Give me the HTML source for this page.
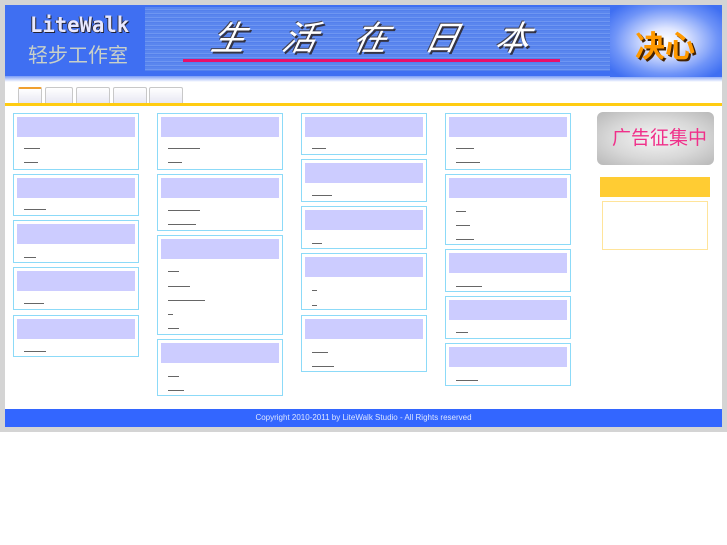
<!DOCTYPE html>
<html><head><meta charset="utf-8"><style>
*{margin:0;padding:0;box-sizing:border-box}
body{width:727px;height:545px;background:#fff;position:relative;overflow:hidden;font-family:"Liberation Sans","Noto Sans CJK SC",sans-serif}
.abs{position:absolute}
.box{position:absolute;border:1px solid #8cdaf8;background:#fff;width:126px}
.box .h{position:absolute;left:3px;top:3px;right:3px;height:20px;background:#ccccff}
.box i{position:absolute;left:10px;height:1px;background:#666}
.tab{position:absolute;top:87px;height:17px;border:1px solid #c8c8c8;border-bottom:none;background:linear-gradient(#fff,#e6e6f2);border-radius:2px 2px 0 0}
</style></head><body>
<div class="abs" style="left:0;top:0;width:727px;height:432px;background:#d4d4d4"></div>
<div class="abs" style="left:5px;top:5px;width:717px;height:422px;background:#fff"></div>
<!-- header -->
<div class="abs" style="left:5px;top:5px;width:717px;height:72px;background:#3f6ff2"></div>
<div class="abs" style="left:5px;top:76px;width:717px;height:6px;background:linear-gradient(#7a9cf6,#fff)"></div>
<div class="abs" style="left:30px;top:13px;font-family:'DejaVu Sans Mono',monospace;font-weight:bold;font-size:21px;color:#e8e8ff;transform:scaleX(0.98);transform-origin:left;text-shadow:1px 1px 0 #223,-1px 0 0 #334">LiteWalk</div>
<div class="abs" style="left:28px;top:39px;font-size:20px;color:#c8d0c8">轻步工作室</div>
<div class="abs" style="left:145px;top:7px;width:465px;height:64px;background:repeating-linear-gradient(#5a86ee 0 2px,#6e96f2 2px 3px,#5480ec 3px 4px)"></div>
<div class="abs" style="left:212px;top:19px;font-size:34px;line-height:40px;color:#fff;font-style:italic;letter-spacing:37px;white-space:nowrap;text-shadow:2px 2px 0 #334,-1px -1px 0 #445;transform:skewX(-12deg)">生活在日本</div>
<div class="abs" style="left:183px;top:59px;width:377px;height:3px;background:#e8106a"></div>
<div class="abs" style="left:610px;top:5px;width:112px;height:72px;background:radial-gradient(ellipse at center,#fff 0,#dfe6ff 25%,#6f94f8 65%,#3f6ff2 90%)"></div>
<div class="abs" style="left:635px;top:22px;font-size:30px;font-weight:bold;color:#ff9900;text-shadow:2px 2px 0 #442200">决心</div>
<!-- tabs -->
<div class="tab" style="left:18px;width:24px;border-top:2px solid #f0a030"></div>
<div class="tab" style="left:45px;width:28px"></div>
<div class="tab" style="left:76px;width:34px"></div>
<div class="tab" style="left:113px;width:34px"></div>
<div class="tab" style="left:149px;width:34px"></div>
<div class="abs" style="left:5px;top:103px;width:717px;height:3px;background:#ffcc11"></div>
<!-- col1 -->
<div class="box" style="left:13px;top:113px;height:57px"><div class="h"></div><i style="top:34px;width:16px"></i><i style="top:48px;width:14px"></i></div>
<div class="box" style="left:13px;top:174px;height:42px"><div class="h"></div><i style="top:34px;width:22px"></i></div>
<div class="box" style="left:13px;top:220px;height:43px"><div class="h"></div><i style="top:36px;width:12px"></i></div>
<div class="box" style="left:13px;top:267px;height:43px"><div class="h"></div><i style="top:35px;width:20px"></i></div>
<div class="box" style="left:13px;top:315px;height:42px"><div class="h"></div><i style="top:35px;width:22px"></i></div>
<!-- col2 -->
<div class="box" style="left:157px;top:113px;height:57px"><div class="h"></div><i style="top:34px;width:32px"></i><i style="top:48px;width:14px"></i></div>
<div class="box" style="left:157px;top:174px;height:57px"><div class="h"></div><i style="top:35px;width:32px"></i><i style="top:49px;width:28px"></i></div>
<div class="box" style="left:157px;top:235px;height:100px"><div class="h"></div><i style="top:35px;width:11px"></i><i style="top:50px;width:22px"></i><i style="top:64px;width:37px"></i><i style="top:78px;width:5px"></i><i style="top:92px;width:11px"></i></div>
<div class="box" style="left:157px;top:339px;height:57px"><div class="h"></div><i style="top:36px;width:11px"></i><i style="top:50px;width:16px"></i></div>
<!-- col3 -->
<div class="box" style="left:301px;top:113px;height:42px"><div class="h"></div><i style="top:34px;width:14px"></i></div>
<div class="box" style="left:301px;top:159px;height:43px"><div class="h"></div><i style="top:35px;width:20px"></i></div>
<div class="box" style="left:301px;top:206px;height:43px"><div class="h"></div><i style="top:36px;width:10px"></i></div>
<div class="box" style="left:301px;top:253px;height:57px"><div class="h"></div><i style="top:36px;width:5px"></i><i style="top:51px;width:5px"></i></div>
<div class="box" style="left:301px;top:315px;height:57px"><div class="h"></div><i style="top:36px;width:16px"></i><i style="top:50px;width:22px"></i></div>
<!-- col4 -->
<div class="box" style="left:445px;top:113px;height:57px"><div class="h"></div><i style="top:34px;width:18px"></i><i style="top:48px;width:24px"></i></div>
<div class="box" style="left:445px;top:174px;height:71px"><div class="h"></div><i style="top:36px;width:10px"></i><i style="top:50px;width:14px"></i><i style="top:64px;width:18px"></i></div>
<div class="box" style="left:445px;top:249px;height:43px"><div class="h"></div><i style="top:36px;width:26px"></i></div>
<div class="box" style="left:445px;top:296px;height:43px"><div class="h"></div><i style="top:35px;width:12px"></i></div>
<div class="box" style="left:445px;top:343px;height:43px"><div class="h"></div><i style="top:36px;width:22px"></i></div>
<!-- right -->
<div class="abs" style="left:597px;top:112px;width:117px;height:53px;border-radius:6px;background:radial-gradient(ellipse at center,#f4f4f4 0,#d8d8d8 55%,#b8b8b8 100%);color:#f0308a;font-size:19px;padding-left:15px;line-height:53px">广告征集中</div>
<div class="abs" style="left:600px;top:177px;width:110px;height:20px;background:#ffcc33"></div>
<div class="abs" style="left:602px;top:201px;width:106px;height:49px;border:1px solid #ffe49a"></div>
<!-- footer -->
<div class="abs" style="left:5px;top:409px;width:717px;height:18px;background:#3366ff;color:#dde6ff;font-size:8px;text-align:center;line-height:18px">Copyright 2010-2011 by LiteWalk Studio - All Rights reserved</div>
</body></html>
